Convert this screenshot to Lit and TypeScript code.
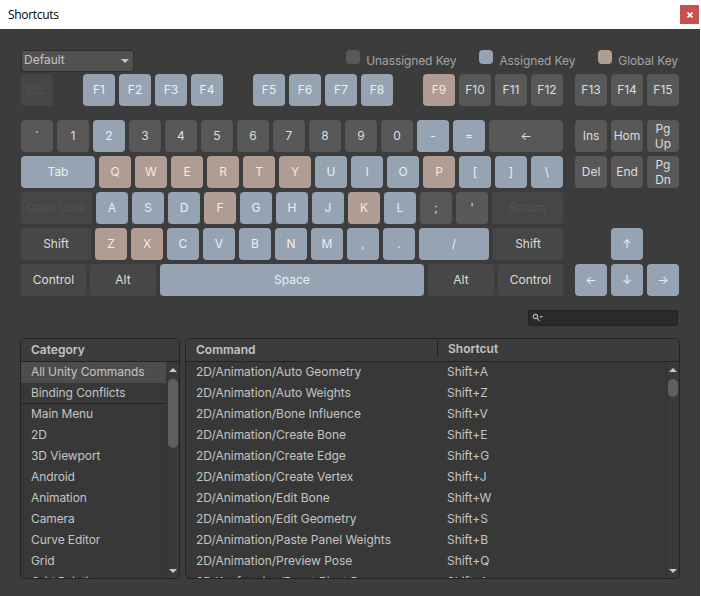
import { LitElement, css, html } from 'lit';
import { customElement } from 'lit/decorators.js';

type Kind = 'free' | 'bound' | 'global' | 'mod' | 'off';
interface Key { label: string; kind: Kind; width?: number; }

const k = (label: string, kind: Kind = 'free', width?: number): Key => ({ label, kind, width });
const bound = (labels: string) => labels.split(' ').map((l) => k(l, 'bound'));

const fnGroups: Key[][] = [
  [k('Esc', 'off')],
  bound('F1 F2 F3 F4'),
  bound('F5 F6 F7 F8'),
  [k('F9', 'global'), k('F10'), k('F11'), k('F12')],
];

const mainRows: Key[][] = [
  [k('`'), k('1'), k('2', 'bound'), k('3'), k('4'), k('5'), k('6'), k('7'), k('8'), k('9'), k('0'),
    k('-', 'bound'), k('=', 'bound'), k('←', 'free', 74)],
  [k('Tab', 'bound', 74), k('Q', 'global'), k('W', 'global'), k('E', 'global'), k('R', 'global'), k('T', 'global'),
    k('Y', 'global'), k('U', 'bound'), k('I', 'bound'), k('O', 'bound'), k('P', 'global'), k('[', 'bound'),
    k(']', 'bound'), k('\\', 'bound')],
  [k('Caps Lock', 'off', 71), k('A', 'bound'), k('S', 'bound'), k('D', 'bound'), k('F', 'global'), k('G', 'bound'),
    k('H', 'bound'), k('J', 'bound'), k('K', 'global'), k('L', 'bound'), k(';'), k("'"), k('Return', 'off', 71)],
  [k('Shift', 'mod', 70), k('Z', 'global'), k('X', 'global'), k('C', 'bound'), k('V', 'bound'), k('B', 'bound'),
    k('N', 'bound'), k('M', 'bound'), k(',', 'bound'), k('.', 'bound'), k('/', 'bound', 70), k('Shift', 'mod', 70)],
  [k('Control', 'mod', 65), k('Alt', 'mod', 66), k('Space', 'bound', 264), k('Alt', 'mod', 66), k('Control', 'mod', 65)],
];

const sideTop: Key[][] = [
  [k('F13'), k('F14'), k('F15')],
  [k('Ins'), k('Hom'), k('Pg Up')],
  [k('Del'), k('End'), k('Pg Dn')],
];

const categories = ['Main Menu', '2D', '3D Viewport', 'Android', 'Animation', 'Camera', 'Curve Editor', 'Grid', 'Grid Painting'];

const commands: [string, string][] = [
  ['2D/Animation/Auto Geometry', 'Shift+A'],
  ['2D/Animation/Auto Weights', 'Shift+Z'],
  ['2D/Animation/Bone Influence', 'Shift+V'],
  ['2D/Animation/Create Bone', 'Shift+E'],
  ['2D/Animation/Create Edge', 'Shift+G'],
  ['2D/Animation/Create Vertex', 'Shift+J'],
  ['2D/Animation/Edit Bone', 'Shift+W'],
  ['2D/Animation/Edit Geometry', 'Shift+S'],
  ['2D/Animation/Paste Panel Weights', 'Shift+B'],
  ['2D/Animation/Preview Pose', 'Shift+Q'],
  ['2D Keyframing/Reset Pivot Bone', 'Shift+A'],
];

@customElement('app-root')
export class AppRoot extends LitElement {
  static styles = css`
    :host {
      display: block;
      width: 701px;
      height: 596px;
      box-sizing: border-box;
      border-right: 1px solid #fff;
      overflow: hidden;
      background: #3c3c3c;
      font-family: Inter, "Liberation Sans", sans-serif;
      font-size: 12px;
      color: #c4c4c4;
    }

    .titlebar {
      height: 29px;
      background: #fff;
      display: flex;
      align-items: center;
      justify-content: space-between;
      padding: 0 1px 0 8px;
      font-family: "Open Sans", sans-serif;
      letter-spacing: -0.3px;
      color: #000;
    }
    .close {
      width: 19px;
      height: 19px;
      background: #c75050;
      display: flex;
      align-items: center;
      justify-content: center;
    }

    .content {
      padding: 21px 20px 0 21px;
    }

    .toolbar {
      display: flex;
      justify-content: space-between;
      height: 24px;
    }
    .dropdown {
      width: 113px;
      height: 22px;
      box-sizing: border-box;
      background: #515151;
      border: 1px solid #2f2f2f;
      border-radius: 3px;
      display: flex;
      align-items: center;
      justify-content: space-between;
      padding: 0 4px 0 2px;
    }
    .dropdown span {
      margin-top: -3px;
    }
    .caret {
      width: 0;
      height: 0;
      border-left: 4px solid transparent;
      border-right: 4px solid transparent;
      border-top: 4px solid #c4c4c4;
    }
    .legend {
      display: flex;
      margin-right: 2px;
    }
    .legend-item {
      display: flex;
      align-items: flex-start;
      gap: 6px;
      margin-left: 23px;
      color: #a4a4a4;
      letter-spacing: -0.1px;
    }
    .legend-item span {
      line-height: 15px;
      margin-top: 3px;
    }
    .swatch {
      width: 14px;
      height: 14px;
      border-radius: 4px;
    }
    .swatch.free { background: #585858; }
    .swatch.bound { background: #96a3b2; }
    .swatch.global { background: #b09c92; }

    .keyboard {
      display: flex;
      gap: 12px;
    }
    .main {
      width: 542px;
      display: flex;
      flex-direction: column;
      gap: 4px;
    }
    .side {
      width: 104px;
      display: flex;
      flex-direction: column;
      gap: 4px;
    }
    .fn-row {
      display: flex;
      justify-content: space-between;
      margin-bottom: 10px;
    }
    .group {
      display: flex;
      gap: 4px;
    }
    .row {
      display: flex;
      justify-content: space-between;
      height: 32px;
    }
    .row.first {
      margin-bottom: 10px;
    }
    .row.center {
      justify-content: center;
    }
    .row.blank {
      visibility: hidden;
    }

    .key {
      width: 32px;
      height: 32px;
      box-sizing: border-box;
      padding-bottom: 1px;
      border-radius: 4px;
      display: flex;
      align-items: center;
      justify-content: center;
      text-align: center;
      line-height: 15px;
      color: #dedede;
      background: #585858;
      flex: none;
    }
    .key.bound { background: #96a3b2; color: #eceff2; }
    .key.global { background: #b09c92; color: #f0ebe8; }
    .key.mod { background: #474747; color: #dedede; }
    .key.off { background: #464646; color: #535353; }

    .search-row {
      display: flex;
      justify-content: flex-end;
      margin: 14px 2px 12px 0;
    }
    .search {
      width: 150px;
      height: 16px;
      box-sizing: border-box;
      background: #2a2a2a;
      border: 1px solid #212121;
      border-radius: 2px;
      display: flex;
      align-items: center;
      padding-left: 3px;
    }

    .panels {
      display: flex;
      gap: 5px;
      margin-left: -1px;
      height: 241px;
    }
    .panel {
      box-sizing: border-box;
      background: #383838;
      border: 1px solid #232323;
      border-radius: 5px;
      overflow: hidden;
      display: flex;
      flex-direction: column;
    }
    .panel.category { width: 160px; }
    .panel.category .item { letter-spacing: -0.1px; }
    .panel.commands { width: 495px; }
    .panel.commands .item { letter-spacing: -0.03px; }

    .head {
      height: 23px;
      flex: none;
      box-sizing: border-box;
      border-bottom: 1px solid #232323;
      background: #3c3c3c;
      display: flex;
      align-items: center;
      font-weight: 600;
      color: #c4c4c4;
      padding: 0 0 2px 10px;
    }
    .head .col-a { width: 241px; }
    .head .col-b {
      border-left: 1px solid #232323;
      padding-left: 10px;
      line-height: 16px;
    }

    .body {
      flex: 1;
      display: flex;
      min-height: 0;
    }
    .list {
      flex: 1;
      min-width: 0;
      overflow: hidden;
    }
    .item {
      height: 21px;
      box-sizing: border-box;
      display: flex;
      align-items: center;
      padding: 0 0 2px 10px;
      white-space: nowrap;
    }
    .item.selected { background: #4d4d4d; }
    .item.divided { border-bottom: 1px solid #232323; }
    .item .col-a { width: 251px; }

    .scrollbar {
      width: 13px;
      flex: none;
      background: #3a3a3a;
      border-left: 1px solid #333;
      display: flex;
      flex-direction: column;
      align-items: center;
      box-sizing: border-box;
      padding: 6px 0 5px 0;
    }
    .arrow-up, .arrow-down {
      width: 0;
      height: 0;
      flex: none;
      border-left: 4px solid transparent;
      border-right: 4px solid transparent;
    }
    .arrow-up { border-bottom: 4px solid #c8c8c8; }
    .arrow-down { border-top: 4px solid #c8c8c8; }
    .thumb {
      width: 10px;
      flex: none;
      margin-top: 7px;
      border-radius: 5px;
      background: #5f5f5f;
    }
    .spacer { flex: 1; }
  `;

  private renderKey(key: Key) {
    const style = key.width ? `width:${key.width}px` : '';
    return html`<div class="key ${key.kind}" style=${style}>${key.label}</div>`;
  }

  private renderScrollbar(thumb: number) {
    return html`<div class="scrollbar">
      <div class="arrow-up"></div>
      <div class="thumb" style="height:${thumb}px"></div>
      <div class="spacer"></div>
      <div class="arrow-down"></div>
    </div>`;
  }

  render() {
    return html`
      <div class="titlebar">
        <span>Shortcuts</span>
        <div class="close">
          <svg width="6" height="6" viewBox="0 0 6 6"><path d="M.5 .5l5 5M5.5 .5l-5 5" stroke="#fff" stroke-width="1.7" fill="none"/></svg>
        </div>
      </div>
      <div class="content">
        <div class="toolbar">
          <div class="dropdown"><span>Default</span><div class="caret"></div></div>
          <div class="legend">
            <div class="legend-item"><div class="swatch free"></div><span>Unassigned Key</span></div>
            <div class="legend-item"><div class="swatch bound"></div><span>Assigned Key</span></div>
            <div class="legend-item"><div class="swatch global"></div><span>Global Key</span></div>
          </div>
        </div>
        <div class="keyboard">
          <div class="main">
            <div class="fn-row">
              ${fnGroups.map((g) => html`<div class="group">${g.map((key) => this.renderKey(key))}</div>`)}
            </div>
            ${mainRows.map((r) => html`<div class="row">${r.map((key) => this.renderKey(key))}</div>`)}
          </div>
          <div class="side">
            ${sideTop.map((r, i) => html`<div class="row ${i === 0 ? 'first' : ''}">${r.map((key) => this.renderKey(key))}</div>`)}
            <div class="row blank"></div>
            <div class="row center">${this.renderKey(k('↑', 'bound'))}</div>
            <div class="row">${['←', '↓', '→'].map((a) => this.renderKey(k(a, 'bound')))}</div>
          </div>
        </div>
        <div class="search-row">
          <div class="search">
            <svg width="12" height="10" viewBox="0 0 12 10">
              <circle cx="3.5" cy="3.5" r="2.2" fill="none" stroke="#b5b5b5" stroke-width="1.2"/>
              <path d="M5 5.2l2.6 2.8" stroke="#b5b5b5" stroke-width="1.1"/>
              <path d="M7.5 3h3.4l-1.7 2z" fill="#b5b5b5"/>
            </svg>
          </div>
        </div>
        <div class="panels">
          <div class="panel category">
            <div class="head">Category</div>
            <div class="body">
              <div class="list">
                <div class="item selected">All Unity Commands</div>
                <div class="item divided">Binding Conflicts</div>
                ${categories.map((c) => html`<div class="item">${c}</div>`)}
              </div>
              ${this.renderScrollbar(69)}
            </div>
          </div>
          <div class="panel commands">
            <div class="head"><div class="col-a">Command</div><div class="col-b">Shortcut</div></div>
            <div class="body">
              <div class="list">
                ${commands.map(([c, s]) => html`<div class="item"><div class="col-a">${c}</div><div>${s}</div></div>`)}
              </div>
              ${this.renderScrollbar(18)}
            </div>
          </div>
        </div>
      </div>
    `;
  }
}
